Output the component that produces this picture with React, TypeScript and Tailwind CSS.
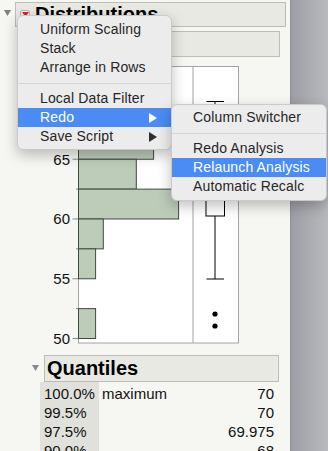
import React from "react";

function MenuItem({
  label,
  active,
  arrow,
  pl,
}: {
  label: string;
  active?: boolean;
  arrow?: boolean;
  pl: "a" | "b";
}) {
  return (
    <div
      className={`flex h-[19px] items-center pr-[14px] text-[14px] leading-[19px] tracking-[0.15px] ${
        pl === "a" ? "pl-[22px]" : "pl-[21px]"
      } ${active ? "bg-[#4a8cf3] text-white" : "text-[#262626]"}`}
    >
      <span className="flex-1 whitespace-nowrap">{label}</span>
      {arrow && (
        <svg width="8" height="10" viewBox="0 0 8 10">
          <path d="M0 0L8 5L0 10Z" fill={active ? "#ffffff" : "#2e2e2e"} />
        </svg>
      )}
    </div>
  );
}

function Separator() {
  return (
    <div className="flex h-[12px] items-center">
      <div className="h-px w-full bg-[#d6d6d6]" />
    </div>
  );
}

function DownTri({ color }: { color: string }) {
  return (
    <svg width="7" height="6" viewBox="0 0 7 6">
      <path d="M0 0L7 0L3.5 6Z" fill={color} />
    </svg>
  );
}

function Chart() {
  const y = (v: number) => 338.5 - (v - 50) * 11.95;
  const bars: [number, number, number][] = [
    [67.5, 70, 140],
    [65, 67.5, 153.6],
    [62.5, 65, 136.3],
    [60, 62.5, 178.6],
    [57.5, 60, 103.3],
    [55, 57.5, 95.6],
    [50, 52.5, 95.6],
  ];
  return (
    <svg width="290" height="290" viewBox="0 57 290 290" className="block">
      <rect x="78.5" y="66.5" width="160" height="276.5" fill="#ffffff" stroke="#a3a3a3" />
      <line x1="193" y1="66.5" x2="193" y2="343" stroke="#a3a3a3" />
      {bars.map(([a, b, r], i) => (
        <rect
          key={i}
          x="78.5"
          y={y(b)}
          width={r - 78.5}
          height={y(a) - y(b)}
          fill="#bdcbb9"
          stroke="#3f4b3f"
          strokeWidth="1"
        />
      ))}
      {[50, 55, 60, 65, 70].map((v) => (
        <g key={v}>
          <line x1="72.5" y1={y(v)} x2="78" y2={y(v)} stroke="#8a8a8a" />
          <text
            x="70"
            y={y(v) + 5.3}
            textAnchor="end"
            fontSize="15"
            fontFamily="'Liberation Sans', Arial, sans-serif"
            fill="#111"
          >
            {v}
          </text>
        </g>
      ))}
      {[52.5, 57.5, 62.5, 67.5].map((v) => (
        <line key={v} x1="76" y1={y(v)} x2="78" y2={y(v)} stroke="#8a8a8a" />
      ))}
      {/* box plot */}
      <line x1="215" y1="101.5" x2="215" y2="160" stroke="#000" />
      <line x1="206.5" y1="101.5" x2="224" y2="101.5" stroke="#000" />
      <rect x="206" y="160" width="18.5" height="56" fill="#ffffff" stroke="#000" />
      <line x1="206" y1="180" x2="224.5" y2="180" stroke="#000" />
      <line x1="215" y1="216" x2="215" y2="279" stroke="#000" />
      <line x1="206.5" y1="279" x2="224" y2="279" stroke="#000" />
      <circle cx="215" cy="314" r="2.6" fill="#000" />
      <circle cx="215" cy="326" r="2.6" fill="#000" />
    </svg>
  );
}

export default function App() {
  const rows: [string, string, string][] = [
    ["100.0%", "maximum", "70"],
    ["99.5%", "", "70"],
    ["97.5%", "", "69.975"],
    ["90.0%", "", "68"],
  ];
  return (
    <div className="relative flex h-[451px] w-[328px] overflow-hidden bg-[#f6f6f2] font-['Liberation_Sans',Arial,sans-serif]">
      <div className="w-[290px] shrink-0">
        {/* Distributions header */}
        <div className="flex items-start pt-[2px]">
          <div className="flex w-[15px] justify-end pr-[4px] pt-[8px]">
            <DownTri color="#7f7f7f" />
          </div>
          <div className="flex h-[25px] w-[271px] items-center border border-[#bdbdb8] bg-[#e9e9e4] pl-[4px]">
            <div className="flex h-[10px] w-[10px] items-center justify-center rounded-[2px] border border-[#b5b5b0] bg-[#f4f4f0]">
              <svg width="7" height="5" viewBox="0 0 7 5">
                <path d="M0 0L7 0L3.5 5Z" fill="#e3201b" />
              </svg>
            </div>
            <span className="ml-[5px] text-[20px] font-bold leading-[25px] text-black">
              Distributions
            </span>
          </div>
        </div>
        {/* variable header */}
        <div className="ml-[30px] mt-[4px] h-[26px] w-[250px] border border-[#bdbdb8] bg-[#e9e9e4]" />
        <Chart />
        {/* Quantiles */}
        <div className="mt-[8px] flex items-start">
          <div className="flex w-[44px] justify-end pr-[5px] pt-[10px]">
            <DownTri color="#8a8a8a" />
          </div>
          <div className="flex h-[27px] w-[235px] items-center border border-[#bdbdb8] bg-[#e9e9e4] pl-[2px]">
            <span className="text-[20px] font-bold leading-[25px] text-black">Quantiles</span>
          </div>
        </div>
        <div className="ml-[40px] flex w-[234px] text-[15px] leading-[19px] text-[#111]">
          <div className="w-[59px] bg-[#e1e1dc] pl-[4px] pt-[2px]">
            {rows.map((r) => (
              <div key={r[0]} className="h-[19px] whitespace-nowrap">
                {r[0]}
              </div>
            ))}
          </div>
          <div className="flex-1 pl-[3px] pt-[2px]">
            {rows.map((r) => (
              <div key={r[0]} className="h-[19px] whitespace-nowrap">
                {r[1]}
              </div>
            ))}
          </div>
          <div className="pt-[2px] text-right">
            {rows.map((r) => (
              <div key={r[0]} className="h-[19px] whitespace-nowrap">
                {r[2]}
              </div>
            ))}
          </div>
        </div>
      </div>
      <div className="flex-1 bg-linear-to-r from-[#9c9da2] to-[#b9babe] shadow-[inset_1px_0_0_rgba(0,0,0,0.08)]" />

      {/* main menu */}
      <div className="absolute left-[17px] top-[15px] w-[155px] rounded-[6px] border border-[#cacaca] bg-[#ececec] pb-[3px] pt-[4px] shadow-[0_5px_14px_rgba(0,0,0,0.25)]">
        <MenuItem pl="a" label="Uniform Scaling" />
        <MenuItem pl="a" label="Stack" />
        <MenuItem pl="a" label="Arrange in Rows" />
        <Separator />
        <MenuItem pl="a" label="Local Data Filter" />
        <MenuItem pl="a" label="Redo" active arrow />
        <MenuItem pl="a" label="Save Script" arrow />
      </div>

      {/* submenu */}
      <div className="absolute left-[171px] top-[104px] w-[156px] rounded-[6px] border border-[#cacaca] bg-[#ececec] pb-[4px] pt-[3px] shadow-[0_5px_14px_rgba(0,0,0,0.25)]">
        <MenuItem pl="b" label="Column Switcher" />
        <Separator />
        <MenuItem pl="b" label="Redo Analysis" />
        <MenuItem pl="b" label="Relaunch Analysis" active />
        <MenuItem pl="b" label="Automatic Recalc" />
      </div>
    </div>
  );
}
